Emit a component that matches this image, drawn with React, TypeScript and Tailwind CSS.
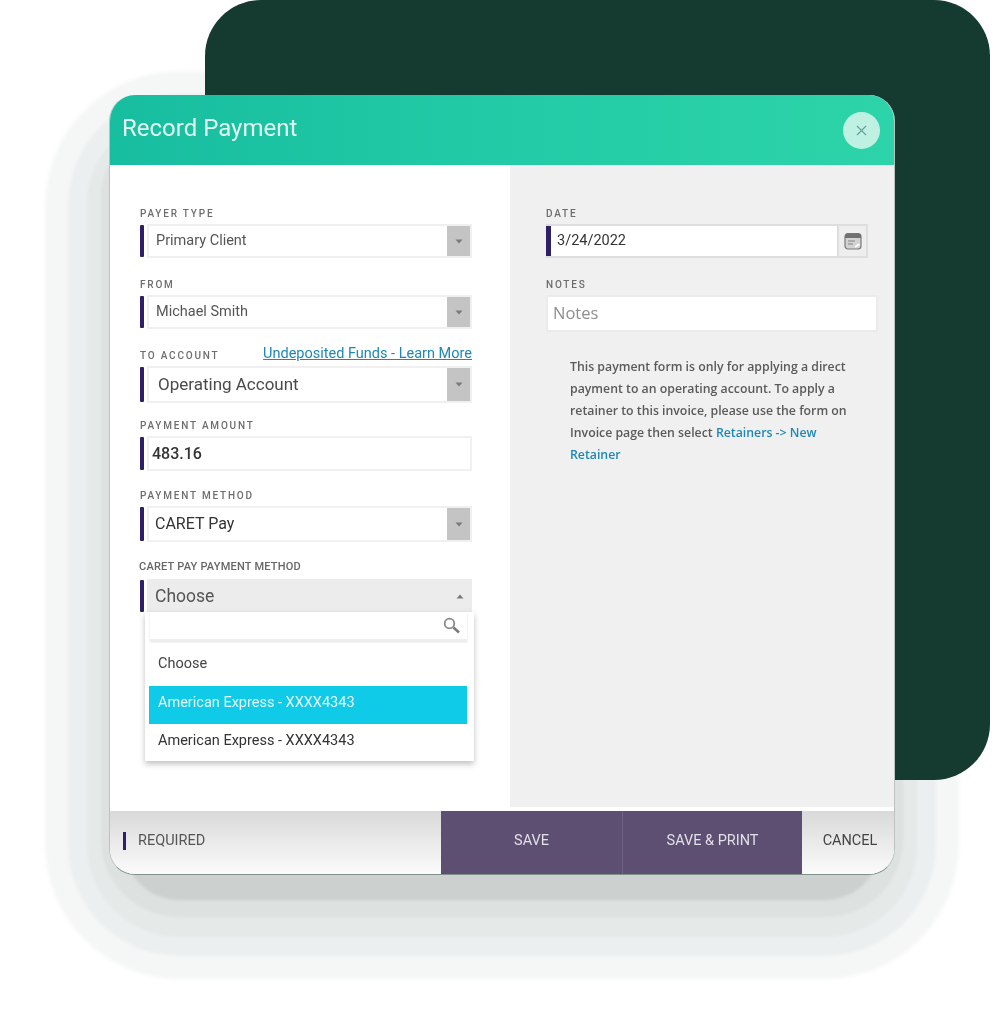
import { ReactNode } from 'react';
import { X } from 'lucide-react';

function Caret({ up = false }: { up?: boolean }) {
  return (
    <svg width="8" height="5" viewBox="0 0 8 5" className={up ? 'rotate-180' : ''}>
      <path d="M0.5 0.5h7L4 4.5z" fill="#7a7a7a" />
    </svg>
  );
}

function FieldLabel({ children }: { children: ReactNode }) {
  return (
    <div className="h-3 text-[10px] leading-[14px] font-medium tracking-[0.18em] text-[#6d6d6d] uppercase">
      {children}
    </div>
  );
}

function SelectField({
  value,
  textClass = 'pl-[7px] text-[14.5px] text-[#555]',
  heightClass = 'h-[34px]',
}: {
  value: string;
  textClass?: string;
  heightClass?: string;
}) {
  return (
    <div className={`mt-[5px] flex w-[332px] ${heightClass}`}>
      <div className="my-px w-1 rounded-[1px] bg-[#2f1f66]" />
      <div className="ml-[3px] flex flex-1 items-center border-2 border-[#f0f0f0] bg-white">
        <span className={`flex-1 ${textClass}`}>{value}</span>
        <span className="flex h-full w-[23px] items-center justify-center bg-[#c4c4c4]">
          <Caret />
        </span>
      </div>
    </div>
  );
}

export default function App() {
  return (
    <div className="relative h-[1024px] w-[1004px] overflow-hidden bg-white font-['Roboto',sans-serif] blur-[0.6px]">
      {/* stepped shadow sits behind the dark panel */}
      <div className="absolute top-[95px] left-[109px] h-[780px] w-[786px] rounded-[70px] shadow-[0_40px_3px_-15px_#ccd0cf,0_34px_3px_8px_#dde1e0,0_40px_3px_22px_#e5e9e8,0_40px_3px_41px_#eceff0,0_40px_4px_64px_#f5f7f6]" />
      <div className="absolute top-0 left-[205px] h-[780px] w-[785px] rounded-[56px] bg-[#153a2f]" />

      <div className="relative pt-[95px] pl-[109px]">
        {/* Modal */}
        <div className="h-[780px] w-[786px]">
          <div className="flex h-full flex-col overflow-hidden rounded-[26px] border border-t-0 border-[#b9c4c0] border-b-[#7e928b] bg-white">
            {/* Header */}
            <div className="-mx-px flex h-[70px] shrink-0 items-center justify-between bg-gradient-to-r from-[#17bd9f] via-[#22cba6] to-[#2dd4a9] pr-[15px] pl-[13px]">
              <h1 className="pb-[4px] text-2xl font-normal text-[#e0f7f1]">Record Payment</h1>
              <button className="flex h-[37px] w-[37px] items-center justify-center rounded-full bg-[#bff1e2]">
                <X className="h-[17px] w-[17px] text-[#5f9da0]" strokeWidth={1.5} />
              </button>
            </div>

            {/* Body */}
            <div className="flex h-[646px] shrink-0">
              <div className="relative w-[400px] pt-[42px] pl-[30px]">
                <FieldLabel>Payer Type</FieldLabel>
                <SelectField value="Primary Client" />

                <div className="mt-5">
                  <FieldLabel>From</FieldLabel>
                  <SelectField value="Michael Smith" />
                </div>

                <div className="mt-5">
                  <div className="flex h-3 w-[332px] items-center justify-between">
                    <FieldLabel>To Account</FieldLabel>
                    <a className="pb-[2px] text-[14.5px] text-[#1e88b4] underline">Undeposited Funds - Learn More</a>
                  </div>
                  <SelectField
                    value="Operating Account"
                    heightClass="h-[37px]"
                    textClass="pl-[9px] text-[17px] text-[#4a4a4a]"
                  />
                </div>

                <div className="mt-4">
                  <FieldLabel>Payment Amount</FieldLabel>
                  <div className="mt-[5px] flex h-[35px] w-[332px]">
                    <div className="my-px w-1 rounded-[1px] bg-[#2f1f66]" />
                    <div className="ml-[3px] flex flex-1 items-center border-2 border-[#f0f0f0] bg-white pl-[3px] text-base font-medium text-[#333]">
                      483.16
                    </div>
                  </div>
                </div>

                <div className="mt-[18px]">
                  <FieldLabel>Payment Method</FieldLabel>
                  <SelectField value="CARET Pay" heightClass="h-[36px]" textClass="pl-[6px] text-base text-[#333]" />
                </div>

                <div className="mt-5">
                  <div className="-ml-px h-3 text-[11px] leading-[10px] font-medium tracking-[0.02em] text-[#666] uppercase">
                    Caret Pay Payment Method
                  </div>
                  <div className="mt-[5px] flex h-[34px] w-[332px]">
                    <div className="my-px w-1 rounded-[1px] bg-[#2f1f66]" />
                    <div className="ml-[3px] flex flex-1 items-center justify-between bg-[#ececec] pr-2 pl-2 text-[17.5px] text-[#555]">
                      Choose
                      <Caret up />
                    </div>
                  </div>
                </div>

                {/* Dropdown */}
                <div className="absolute top-[447px] left-[35px] h-[149px] w-[329px] bg-white text-[14.5px] shadow-[0_3px_6px_rgba(0,0,0,0.25)]">
                  <div className="ml-[5px] flex h-[29px] w-[317px] items-center justify-end border-b-2 border-[#eee] bg-white pr-[6px] shadow-[0_1px_2px_rgba(0,0,0,0.12)]">
                    <svg width="18" height="17" viewBox="0 0 18 17" fill="none">
                      <circle cx="6.5" cy="6.5" r="4.8" stroke="#8a8a8a" strokeWidth="1.8" />
                      <path d="M10.5 10.5L16 15.5" stroke="#7a7a7a" strokeWidth="2.6" />
                    </svg>
                  </div>
                  <div className="mt-[4px] mb-[4px] flex h-[37px] items-center pl-[13px] text-[#444]">Choose</div>
                  <div className="ml-[4px] flex h-[38px] w-[318px] items-center bg-[#0fcbe8] pb-[5px] pl-[9px] text-[#e6f9fc]">
                    American Express - XXXX4343
                  </div>
                  <div className="flex h-[33px] items-center pl-[13px] text-[#333]">American Express - XXXX4343</div>
                </div>
              </div>

              <div className="h-[642px] flex-1 bg-[#f0f0f0] pt-[42px] pl-[36px]">
                <FieldLabel>Date</FieldLabel>
                <div className="mt-[5px] flex h-[34px] w-[322px]">
                  <div className="flex h-full w-[293px] border-2 border-l-0 border-[#dedede] bg-white">
                    <div className="w-[5px] bg-[#2f1f66]" />
                    <span className="flex items-center pl-[6px] text-[14.5px] text-[#333]">3/24/2022</span>
                  </div>
                  <div className="flex flex-1 items-center justify-center border-2 border-l-0 border-[#dedede] bg-[#eeeeee]">
                    <svg width="18" height="18" viewBox="0 0 18 18" fill="none">
                      <rect x="1" y="1.5" width="16" height="15.5" rx="3" fill="#d2d2d2" stroke="#7a7a7a" strokeWidth="1.2" />
                      <path d="M1 4.5a3 3 0 0 1 3-3h10a3 3 0 0 1 3 3V6H1z" fill="#707070" />
                      <path d="M4 9h7M4 12h5" stroke="#a0a0a0" strokeWidth="1.3" />
                      <path d="M11 15l4.5-3" stroke="#fff" strokeWidth="2" />
                    </svg>
                  </div>
                </div>

                <div className="mt-5">
                  <FieldLabel>Notes</FieldLabel>
                  <div className="mt-[5px] flex h-[37px] w-[332px] items-center border-2 border-[#ebebeb] bg-white pl-[5px] font-['Open_Sans',sans-serif] text-[16.5px] text-[#8e8e8e]">
                    Notes
                  </div>
                </div>

                <p className="mt-[24px] ml-[24px] w-[290px] font-['Open_Sans',sans-serif] text-[12.3px] leading-[22px] font-semibold text-[#5a5a5a]">
                  This payment form is only for applying a direct payment to an operating account. To apply a retainer
                  to this invoice, please use the form on Invoice page then select{' '}
                  <a className="text-[#1e88b4]">Retainers -&gt; New</a>
                  <br />
                  <a className="text-[#1e88b4]">Retainer</a>
                </p>
              </div>
            </div>

            {/* Footer */}
            <div className="flex h-[64px] flex-1 items-stretch bg-gradient-to-b from-[#d9d9d9] to-[#fbfbfb] text-[14.5px] text-[#555]">
              <div className="flex w-[331px] items-center pb-[3px] pl-[13px]">
                <div className="h-[18px] w-[3px] bg-[#2f1f66]" />
                <span className="ml-3">REQUIRED</span>
              </div>
              <button className="w-[181px] bg-[#5c4f72] pb-[3px] text-[#e2dfe8]">SAVE</button>
              <button className="w-[180px] border-l border-[#6f6385] bg-[#5c4f72] pb-[3px] text-[#e2dfe8]">
                SAVE &amp; PRINT
              </button>
              <button className="flex-1 pb-[3px] pl-1 text-[#444]">CANCEL</button>
            </div>
          </div>
        </div>
      </div>
    </div>
  );
}
